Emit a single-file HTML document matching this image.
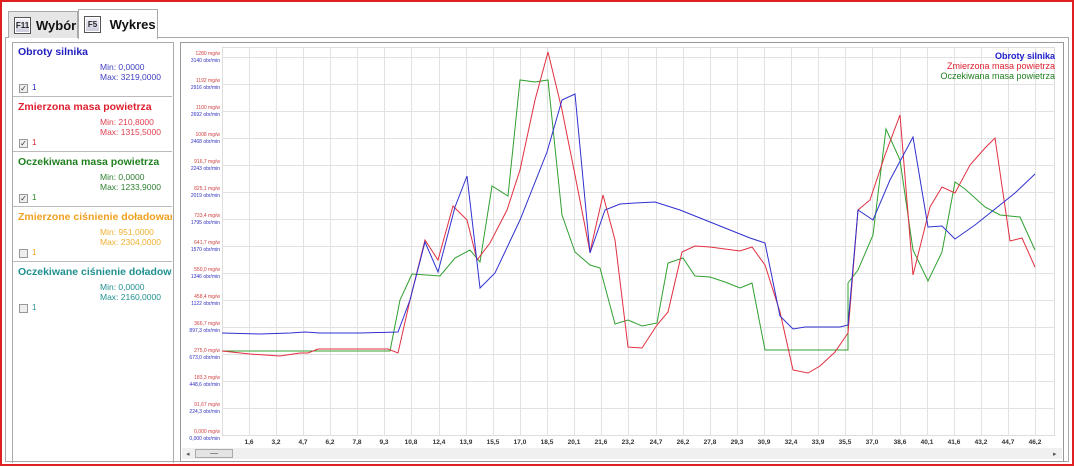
<!DOCTYPE html>
<html><head><meta charset="utf-8"><style>
*{margin:0;padding:0;box-sizing:border-box}
body{width:1074px;height:467px;background:#fff;position:relative;overflow:hidden;font-family:"Liberation Sans",sans-serif}
.abs{position:absolute}
.tab{position:absolute;border:1px solid #a9a9a9;border-bottom:none;display:flex;align-items:center;font-weight:bold;font-size:13px;color:#111}
.key{width:17px;height:17px;border:1px solid #555;background:linear-gradient(#f4f4fb,#c9c9dc);font-size:8px;font-weight:bold;display:flex;align-items:center;justify-content:center;margin:0 5px 0 5px;color:#222;box-shadow:inset 0 0 0 1px #fff}
.item{position:absolute;left:13px;width:159px;height:55px;border-bottom:1px solid #bbb}
.item .t{position:absolute;left:5px;top:4px;font-size:10.5px;font-weight:bold;white-space:nowrap;overflow:hidden;width:154px}
.item .m{position:absolute;left:87px;font-size:8.5px}
.cb{position:absolute;left:6px;top:42px;width:9px;height:9px;border:1px solid #999;background:#eee;font-size:8px;line-height:8px;color:#334;text-align:center}
.item .n{position:absolute;left:19px;top:41px;font-size:8px}
</style></head><body>
<div class="abs" style="left:0;top:0;width:1074px;height:466px;border:2px solid #e02020"></div>
<div class="abs" style="left:5px;top:37px;width:1064px;height:425px;border:1px solid #a9a9a9"></div>
<div class="tab" style="left:8px;top:11px;width:70px;height:27px;background:#e6e6e6"><div class="key">F11</div>Wybór</div>
<div class="tab" style="left:78px;top:9px;width:80px;height:30px;background:#fff"><div class="key">F5</div>&nbsp;Wykres</div>
<div class="abs" style="left:12px;top:42px;width:162px;height:421px;border:1px solid #aaa;border-bottom:none"></div>
<div class="item" style="top:42px"><div class="t" style="color:#2020c0">Obroty silnika</div><div class="m" style="top:20px;color:#4040c0">Min: 0,0000</div><div class="m" style="top:30px;color:#4040c0">Max: 3219,0000</div><div class="cb">✓</div><div class="n" style="color:#2020c0">1</div></div>
<div class="item" style="top:97px"><div class="t" style="color:#e02030">Zmierzona masa powietrza</div><div class="m" style="top:20px;color:#e04050">Min: 210,8000</div><div class="m" style="top:30px;color:#e04050">Max: 1315,5000</div><div class="cb">✓</div><div class="n" style="color:#e02030">1</div></div>
<div class="item" style="top:152px"><div class="t" style="color:#208020">Oczekiwana masa powietrza</div><div class="m" style="top:20px;color:#308030">Min: 0,0000</div><div class="m" style="top:30px;color:#308030">Max: 1233,9000</div><div class="cb">✓</div><div class="n" style="color:#208020">1</div></div>
<div class="item" style="top:207px"><div class="t" style="color:#f0a020">Zmierzone ciśnienie doładowania</div><div class="m" style="top:20px;color:#f0b030">Min: 951,0000</div><div class="m" style="top:30px;color:#f0b030">Max: 2304,0000</div><div class="cb"></div><div class="n" style="color:#f0a020">1</div></div>
<div class="item" style="top:262px;border-bottom:none"><div class="t" style="color:#209090">Oczekiwane ciśnienie doładowania</div><div class="m" style="top:20px;color:#209090">Min: 0,0000</div><div class="m" style="top:30px;color:#209090">Max: 2160,0000</div><div class="cb"></div><div class="n" style="color:#209090">1</div></div>
<div class="abs" style="left:180px;top:42px;width:884px;height:420px;border:1px solid #999"></div>
<svg class="abs" style="left:0;top:0" width="1074" height="467" font-family="Liberation Sans, sans-serif">
<rect x="222.5" y="47.5" width="832" height="388" fill="none" stroke="#ddd"/>
<g stroke="#e2e2e2">
<path d="M222 57.5H1055M222 84.5H1055M222 111.5H1055M222 138.5H1055M222 165.5H1055M222 192.5H1055M222 219.5H1055M222 246.5H1055M222 273.5H1055M222 300.5H1055M222 327.5H1055M222 354.5H1055M222 381.5H1055M222 408.5H1055"/>
<path d="M249.5 47V436M276.5 47V436M303.5 47V436M330.5 47V436M357.5 47V436M384.5 47V436M411.5 47V436M439.5 47V436M466.5 47V436M493.5 47V436M520.5 47V436M547.5 47V436M574.5 47V436M601.5 47V436M628.5 47V436M656.5 47V436M683.5 47V436M710.5 47V436M737.5 47V436M764.5 47V436M791.5 47V436M818.5 47V436M845.5 47V436M872.5 47V436M900.5 47V436M927.5 47V436M954.5 47V436M981.5 47V436M1008.5 47V436M1035.5 47V436"/>
</g>
<g font-size="5" text-anchor="end">
<g fill="#d04040">
<text x="220" y="55">1280 mg/w</text><text x="220" y="82">1192 mg/w</text><text x="220" y="109">1100 mg/w</text><text x="220" y="136">1008 mg/w</text><text x="220" y="163">916,7 mg/w</text><text x="220" y="190">825,1 mg/w</text><text x="220" y="217">733,4 mg/w</text><text x="220" y="244">641,7 mg/w</text><text x="220" y="271">550,0 mg/w</text><text x="220" y="298">458,4 mg/w</text><text x="220" y="325">366,7 mg/w</text><text x="220" y="352">275,0 mg/w</text><text x="220" y="379">183,3 mg/w</text><text x="220" y="406">91,67 mg/w</text><text x="220" y="433">0,000 mg/w</text></g>
<g fill="#3030c0">
<text x="220" y="62">3140 obr/min</text><text x="220" y="89">2916 obr/min</text><text x="220" y="116">2692 obr/min</text><text x="220" y="143">2468 obr/min</text><text x="220" y="170">2243 obr/min</text><text x="220" y="197">2019 obr/min</text><text x="220" y="224">1795 obr/min</text><text x="220" y="251">1570 obr/min</text><text x="220" y="278">1346 obr/min</text><text x="220" y="305">1122 obr/min</text><text x="220" y="332">897,3 obr/min</text><text x="220" y="359">673,0 obr/min</text><text x="220" y="386">448,6 obr/min</text><text x="220" y="413">224,3 obr/min</text><text x="220" y="440">0,000 obr/min</text></g>
</g>
<g font-size="6.5" font-weight="bold" fill="#333" text-anchor="middle">
<text x="249" y="444">1,6</text><text x="276" y="444">3,2</text><text x="303" y="444">4,7</text><text x="330" y="444">6,2</text><text x="357" y="444">7,8</text><text x="384" y="444">9,3</text><text x="411" y="444">10,8</text><text x="439" y="444">12,4</text><text x="466" y="444">13,9</text><text x="493" y="444">15,5</text><text x="520" y="444">17,0</text><text x="547" y="444">18,5</text><text x="574" y="444">20,1</text><text x="601" y="444">21,6</text><text x="628" y="444">23,2</text><text x="656" y="444">24,7</text><text x="683" y="444">26,2</text><text x="710" y="444">27,8</text><text x="737" y="444">29,3</text><text x="764" y="444">30,9</text><text x="791" y="444">32,4</text><text x="818" y="444">33,9</text><text x="845" y="444">35,5</text><text x="872" y="444">37,0</text><text x="900" y="444">38,6</text><text x="927" y="444">40,1</text><text x="954" y="444">41,6</text><text x="981" y="444">43,2</text><text x="1008" y="444">44,7</text><text x="1035" y="444">46,2</text>
</g>
<g fill="none" stroke-width="1">
<polyline stroke="#30a030" points="222,351 390,351 400,300 412,274 440,276 455,258 470,250 480,262 492,186 508,196 520,80 535,82 548,80 562,215 575,252 590,265 600,268 615,324 628,320 642,326 657,323 668,263 683,258 695,276 710,277 725,282 740,288 752,283 765,350 848,350 848,283 858,270 873,235 886,129 900,160 913,250 928,281 942,252 955,182 965,189 985,207 1000,215 1020,217 1035,250"/>
<polyline stroke="#e03040" points="222,351 250,354 280,356 300,353 308,353 318,349 340,349 388,349 398,353 410,300 425,240 438,260 453,206 467,220 477,260 490,243 507,210 520,170 535,100 548,52 562,110 575,175 590,252 603,195 615,240 628,347 642,348 657,325 668,312 682,252 695,246 710,247 725,249 740,251 752,247 765,265 780,312 793,370 808,373 820,366 835,352 848,333 858,210 870,200 885,155 900,115 913,275 930,207 942,187 955,193 970,165 985,148 995,138 1010,241 1022,238 1035,267"/>
<polyline stroke="#3030d0" points="222,333 260,334 290,333 305,332 320,333 360,333 398,332 410,300 425,242 438,272 455,207 467,176 480,288 495,273 520,220 547,152 562,100 575,94 590,253 605,210 620,204 635,203 655,202 680,210 700,218 730,230 750,238 765,243 780,316 793,329 805,327 840,327 848,325 858,210 873,220 890,180 913,137 928,227 942,226 955,239 975,225 1000,205 1015,193 1035,174"/>
</g>
<g font-size="9" font-weight="bold" text-anchor="end">
<text x="1055" y="59" fill="#2020d0">Obroty silnika</text>
<text x="1055" y="69" fill="#e02030" font-weight="normal">Zmierzona masa powietrza</text>
<text x="1055" y="79" fill="#208020" font-weight="normal">Oczekiwana masa powietrza</text>
</g>
<rect x="182" y="448" width="880" height="11" fill="#f0f0f0"/>
<rect x="195.5" y="449.5" width="37" height="8" fill="#e4e4e4" stroke="#aaa"/>
<path d="M210 453.5H218" stroke="#888"/>
<text x="186" y="456" font-size="7" fill="#555">◂</text>
<text x="1053" y="456" font-size="7" fill="#555">▸</text>
</svg>
</body></html>
